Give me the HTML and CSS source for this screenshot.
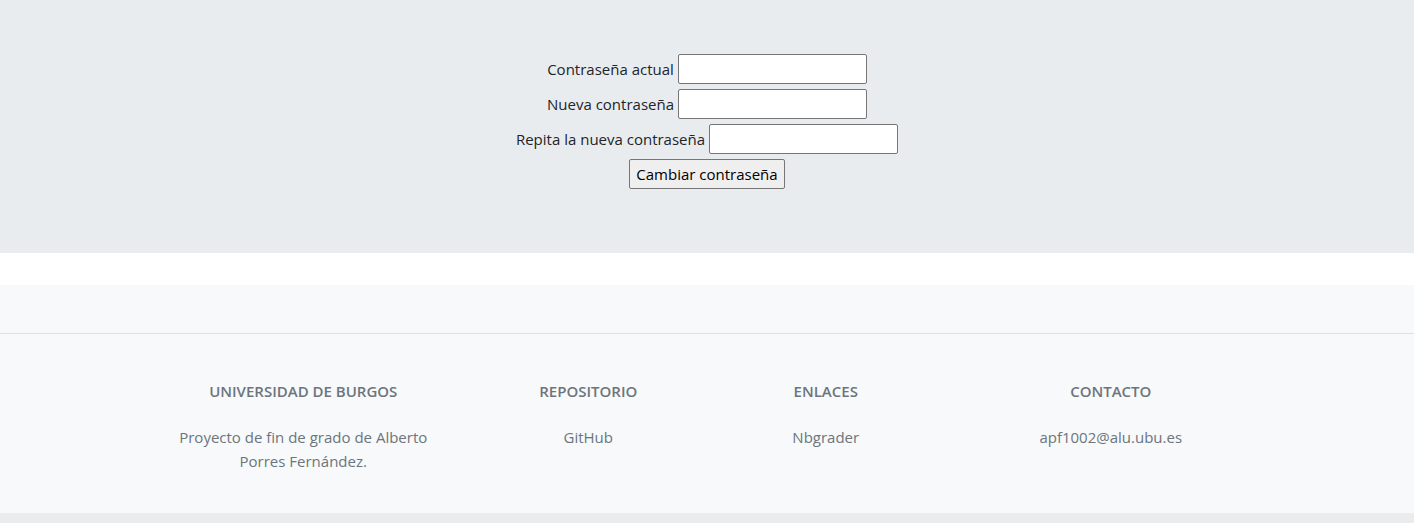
FILE: index.html
```html
<!DOCTYPE html>
<html lang="es">
<head>
<meta charset="utf-8">
<title>Cambiar contraseña</title>
<meta name="viewport" content="width=device-width, initial-scale=1">
<link rel="stylesheet" href="styles.css">
</head>
<body>
<main class="jumbotron">
  <form class="password-form">
    <div class="field">
      <label for="current">Contraseña actual</label>
      <input id="current" type="password">
    </div>
    <div class="field">
      <label for="new">Nueva contraseña</label>
      <input id="new" type="password">
    </div>
    <div class="field">
      <label for="repeat">Repita la nueva contraseña</label>
      <input id="repeat" type="password">
    </div>
    <button class="submit" type="submit">Cambiar contraseña</button>
  </form>
</main>
<footer class="footer">
  <div class="footer-top"></div>
  <div class="columns">
    <section class="column column-wide">
      <h6 class="title">Universidad de Burgos</h6>
      <p class="text">Proyecto de fin de grado de Alberto Porres Fernández.</p>
    </section>
    <section class="column">
      <h6 class="title">Repositorio</h6>
      <p class="text"><a class="link" href="#">GitHub</a></p>
    </section>
    <section class="column">
      <h6 class="title">Enlaces</h6>
      <p class="text"><a class="link" href="#">Nbgrader</a></p>
    </section>
    <section class="column column-wide">
      <h6 class="title">Contacto</h6>
      <p class="text">apf1002@alu.ubu.es</p>
    </section>
  </div>
  <div class="copyright"></div>
</footer>
</body>
</html>
```
FILE: styles.css
```css
* { box-sizing: border-box; }

body {
  margin: 0;
  font-family: "Open Sans", "Noto Sans", sans-serif;
  font-size: 15px;
  line-height: 24px;
  color: #212529;
  background: #fff;
}

.jumbotron {
  margin-bottom: 32px;
  padding: 54px 32px 64px;
  background: #e9ecef;
}

.password-form {
  display: flex;
  flex-direction: column;
  align-items: center;
  gap: 5px;
}

.field {
  display: flex;
  align-items: center;
  gap: 4px;
}

.field input {
  width: 189px;
  height: 30px;
  padding: 1px 2px;
  border: 1px solid #767676;
  border-radius: 2px;
  background: #fff;
  font: inherit;
}

.submit {
  height: 30px;
  padding: 1px 6px;
  border: 1px solid #767676;
  border-radius: 2px;
  background: #efefef;
  color: #000;
  font: inherit;
}

.footer {
  background: #f8f9fa;
  color: #6c757d;
  text-align: center;
}

.footer-top {
  height: 49px;
  border-bottom: 1px solid #dee2e6;
}

.columns {
  display: flex;
  flex-wrap: wrap;
  justify-content: space-around;
  max-width: 1140px;
  margin: 0 auto;
  padding: 48px 0 16px;
}

.column {
  flex: 0 0 calc(100% / 6);
  padding: 0 12px;
}

.column-wide {
  flex-basis: 25%;
}

.title {
  margin: 0 0 24px;
  font-size: 15px;
  font-weight: 600;
  line-height: 19px;
  text-transform: uppercase;
}

.text {
  margin: 0 0 24px;
}

.link {
  color: inherit;
  text-decoration: none;
}

.copyright {
  height: 10px;
  background: rgba(0, 0, 0, 0.05);
}
```
